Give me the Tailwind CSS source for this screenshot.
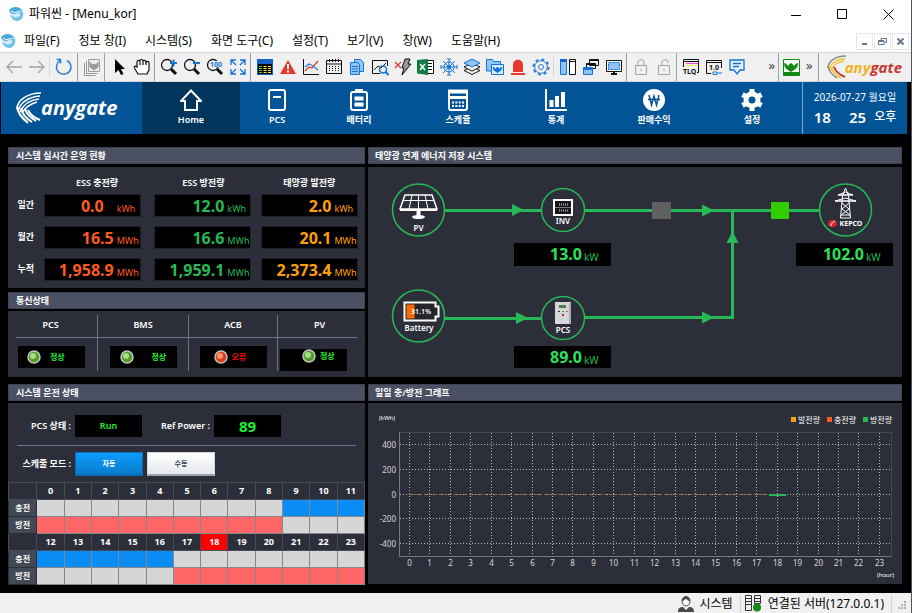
<!DOCTYPE html>
<html lang="ko">
<head>
    <meta charset="UTF-8">
    <meta name="viewport" content="width=device-width, initial-scale=1.0">
    <title>파워씬 - [Menu_kor]</title>
    <script src="https://cdn.jsdelivr.net/npm/@tailwindcss/browser@4"></script>
</head>
<body class="min-h-screen flex flex-col bg-black border-r border-gray-600 font-['Noto_Sans','Noto_Sans_CJK_KR',sans-serif] text-white text-[9px] leading-3">

    <!-- Shared icons -->
    <svg class="hidden">
        <symbol id="app-icon" viewBox="0 0 16 16">
            <circle cx="8.500" cy="8" r="7" fill="#d3ecf8"/>
            <path d="M1 4c4-4 10-4 14 1-3-1-5 0-6 2C6 9 2 8 1 4z" fill="#4aa9dc"/>
            <path d="M15 6c-1-1-4-1-5 1 3 0 3 3 0 4-3 1-5 0-7-2 0 4 4 6 7 6 4-1 6-5 5-9z" fill="#6fc3e8"/>
            <path d="M3 5c3 2 5 2 7 0" fill="none" stroke="#fff"/>
        </symbol>
        <symbol id="swoosh" viewBox="0 0 26 32">
            <path d="M25 1C12 1 1 8 1 17M24 4C12 5 4 11 2 19M23 7C13 8 7 13 4 20M21 10C14 12 9 16 6 21" fill="none" stroke="currentColor" stroke-width="1.700"/>
            <path d="M1 15c1 7 6 12 11 16M5 16c1 6 6 11 11 14M9 17c2 6 6 9 11 12M12 18c2 4 6 8 12 10" fill="none" stroke="currentColor" stroke-width="2"/>
        </symbol>
        <symbol id="magnifier" viewBox="0 0 20 20">
            <circle cx="8" cy="8" r="5.500" fill="none" stroke="#111" stroke-width="1.300"/>
            <path d="M12 12l5 5" stroke="#111" stroke-width="3"/>
        </symbol>
        <symbol id="turtle" viewBox="0 0 16 16">
            <path d="M1 4c2 0 3 2 4 3 1-1 1-2 3-3 2 1 2 2 3 3 1-1 2-3 4-3 0 4-2 6-4 7l-3 2-3-2C3 10 1 8 1 4z" fill="currentColor"/>
        </symbol>
    </svg>

    <!-- Title bar -->
    <header class="bg-white text-black">
        <div class="flex items-center h-7 pl-2 text-[12px] leading-4">
            <svg class="size-4 mr-[5px]"><use href="#app-icon"/></svg>
            <h1 class="flex-1">파워씬 - [Menu_kor]</h1>
            <button class="w-[46px] h-7 flex justify-center items-center" aria-label="Minimize"><svg class="size-[11px]" viewBox="0 0 11 11" stroke="#000"><path d="M0 6.500h10"/></svg></button>
            <button class="w-[46px] h-7 flex justify-center items-center" aria-label="Maximize"><svg class="size-[11px]" viewBox="0 0 11 11" stroke="#000" fill="none"><path d="M.5.5h9v9h-9z"/></svg></button>
            <button class="w-[46px] h-7 flex justify-center items-center" aria-label="Close"><svg class="size-[11px]" viewBox="0 0 11 11" stroke="#000"><path d="M.5.5l10 10M10.500.5l-10 10"/></svg></button>
        </div>
        <!-- Menu -->
        <div class="flex items-center h-6 pt-[2px] pr-[2px] text-[12px] leading-4">
            <svg class="size-4 mr-2"><use href="#app-icon"/></svg>
            <nav class="flex flex-1 gap-[19px]">
                <button>파일(F)</button>
                <button>정보 창(I)</button>
                <button>시스템(S)</button>
                <button>화면 도구(C)</button>
                <button>설정(T)</button>
                <button>보기(V)</button>
                <button>창(W)</button>
                <button>도움말(H)</button>
            </nav>
            <div class="flex gap-px *:size-[17px] *:border *:border-gray-200 *:flex *:items-center *:justify-center text-slate-500">
                <button aria-label="Minimize window"><svg class="size-[9px]" viewBox="0 0 9 9" stroke="currentColor" stroke-width="2"><path d="M2 7h5"/></svg></button>
                <button aria-label="Restore window"><svg class="size-[9px]" viewBox="0 0 9 9" stroke="currentColor" fill="none"><path d="M3 3V1.500h5.500v4H6.500M.5 3.500h5.500v4H.5zM.5 4.500h5"/></svg></button>
                <button aria-label="Close window"><svg class="size-[9px]" viewBox="0 0 9 9" stroke="currentColor" stroke-width="2"><path d="M1.500 1.500l6 6M7.500 1.500l-6 6"/></svg></button>
            </div>
        </div>
    </header>

    <!-- Toolbar -->
    <div class="flex h-[30px] bg-[#f0f0f0] border-y border-y-gray-300 pl-[2px]">
        <div class="flex pr-[1px] *:w-[23px] *:flex *:justify-center *:items-center">
            <button aria-label="Back"><svg class="size-[18px]" viewBox="0 0 18 18" fill="none" stroke="#a3a3a3" stroke-width="1.300"><path d="M17 9H2M8 3L2 9l6 6"/></svg></button>
            <button aria-label="Forward"><svg class="size-[18px]" viewBox="0 0 18 18" fill="none" stroke="#a3a3a3" stroke-width="1.300"><path d="M1 9h15M10 3l6 6-6 6"/></svg></button>
        </div>
        <div class="self-center w-px h-5 bg-gray-300"></div>
        <div class="flex pl-[2px] pr-[2px] border-r border-gray-400 *:w-[23px] *:flex *:justify-center *:items-center">
            <button aria-label="Refresh"><svg class="size-[18px]" viewBox="0 0 18 18" fill="none" stroke="#2b7cd3" stroke-width="1.500"><path d="M12 2.500A7.300 7.300 0 1 1 5 2.700M1.500 1.500h4v4"/></svg></button>
        </div>
        <div class="flex pl-[2px] pr-[1px] border-r border-gray-400 *:w-[23px] *:flex *:justify-center *:items-center">
            <button aria-label="Library"><svg class="size-[18px]" viewBox="0 0 18 18" fill="none" stroke="#9a9a9a"><path d="M5.500 1.500h11v12h-11zM3.500 3v12.500h11M1.500 5v12.500h11"/><path d="M7 4l2 3 2-1 2 1 2-3v5l-4 3-4-3z" fill="#9a9a9a"/></svg></button>
        </div>
        <div class="flex pl-[2px] pr-[1px] border-r border-gray-400 *:w-[23px] *:flex *:justify-center *:items-center">
            <button aria-label="Select"><svg class="size-[18px]" viewBox="0 0 18 18"><path d="M5 1v14l3.500-3 2.500 5 2.500-1-2.500-5h4z"/></svg></button>
            <button aria-label="Pan"><svg class="size-[18px]" viewBox="0 0 18 18" fill="#fff" stroke="#111" stroke-width="1.200"><path d="M5 16l-3-5c-1-2-1-3 1-3l1 1V4c0-2 3-2 3-1 0-2 3-2 3 0 0-1 3-1 3 1 1-1 3-1 3 1v7l-2 4z"/><path d="M7 3v4M10 3v4M13 4v3" fill="none"/></svg></button>
        </div>
        <div class="flex pl-[2px] pr-[1px] border-r border-gray-400 *:w-[23px] *:flex *:justify-center *:items-center">
            <button aria-label="Zoom in"><svg class="size-5" viewBox="0 0 20 20"><use href="#magnifier"/><path d="M11 6h7M14.500 2.500v7" stroke="#1473d8" stroke-width="2"/></svg></button>
            <button aria-label="Zoom out"><svg class="size-5" viewBox="0 0 20 20"><use href="#magnifier"/><path d="M11 6h7" stroke="#1473d8" stroke-width="2"/></svg></button>
            <button aria-label="Zoom 100%"><svg class="size-5" viewBox="0 0 20 20"><use href="#magnifier"/><path d="M5 4h14v6H5z" fill="#f0f0f0"/><text x="5" y="10" class="text-[7px] font-bold" fill="#1473d8">100</text></svg></button>
            <button aria-label="Fit"><svg class="size-[18px]" viewBox="0 0 18 18" fill="none" stroke="#1473d8" stroke-width="1.300"><path d="M2 7V2h5M11 2h5v5M16 11v5h-5M7 16H2v-5M2 2l5 5M16 2l-5 5M16 16l-5-5M2 16l5-5"/></svg></button>
        </div>
        <div class="flex pl-[2px] pr-[1px] *:w-[23px] *:flex *:justify-center *:items-center">
            <button aria-label="List"><svg class="size-4" viewBox="0 0 16 16"><path d="M0 0h16v16H0z" fill="#1464c8"/><path d="M1 5h14v10H1z"/><path d="M2 7.500h3M2 9.500h3M2 11.500h3M2 13.500h3" stroke="#5fd04a"/><path d="M6.500 7.500h3M6.500 9.500h3M6.500 11.500h3M6.500 13.500h3M11 7.500h3M11 9.500h3M11 11.500h3M11 13.500h3" stroke="#ffe14a"/></svg></button>
            <button aria-label="Alarm"><svg class="size-4" viewBox="0 0 16 16"><path d="M8 1l8 14H0z" fill="#e63a30"/><path d="M8 5v5M8 11.500v2" stroke="#fff" stroke-width="2"/></svg></button>
            <button aria-label="Trend"><svg class="size-[18px]" viewBox="0 0 18 18" fill="none"><path d="M1.500 1v15.500H17" stroke="#111"/><path d="M3 13l4-4 3 1 6-7" stroke="#e63a30" stroke-width="1.300"/><path d="M3 9l4-3 4 2 5 4" stroke="#2b7cd3" stroke-width="1.300"/></svg></button>
            <button aria-label="Schedule"><svg class="size-[18px]" viewBox="0 0 18 18" fill="none" stroke="#111"><path d="M1.500 2.500h15v13h-15zM2 6h14M4.500 1v3M7.500 1v3M10.500 1v3M13.500 1v3"/><path d="M4 8.500h11M4 10.500h11M4 12.500h11" stroke-dasharray="1 2"/></svg></button>
            <button aria-label="Report"><svg class="size-[18px]" viewBox="0 0 18 18" fill="#8ec5f5" stroke="#1473d8"><path d="M6.500 1.500h6l3 3v9h-9z"/><path d="M2.500 4.500h7l2 2v10h-9zM4 8.500h6M4 11h6M4 13.500h6"/></svg></button>
            <button aria-label="Analysis"><svg class="size-[18px]" viewBox="0 0 18 18" fill="none"><path d="M9 15.500H1.500v-13h15V8" stroke="#111"/><path d="M3 12l4-4 3 2 5-5" stroke="#111"/><circle cx="12" cy="11.500" r="3.500" stroke="#1473d8" stroke-width="1.500"/><path d="M14.500 14l3 3" stroke="#1473d8" stroke-width="2"/></svg></button>
            <button aria-label="Trip"><svg class="size-[18px]" viewBox="0 0 18 18"><path d="M1 4l6 6M7 4l-6 6" stroke="#e63a30" stroke-width="1.300"/><path d="M11 1h5l-2 5h3L8 17l2-7H8z" fill="#999" stroke="#111"/></svg></button>
            <button aria-label="Excel"><svg class="size-[18px]" viewBox="0 0 18 18"><path d="M10 2.500h6.500v13H10M11 5.500h4M11 8.500h4M11 11.500h4" fill="#fff" stroke="#111"/><path d="M0 2l11-1v16L0 15.500z" fill="#107c41"/><path d="M3 6l5 6M8 6l-5 6" stroke="#fff" stroke-width="1.500"/></svg></button>
            <button aria-label="Control"><svg class="size-[18px]" viewBox="0 0 18 18" fill="none" stroke="#1473d8"><circle cx="9" cy="9" r="5"/><circle cx="9" cy="9" r="1.500"/><path d="M9 1v16M1 9h16M3 3l12 12M15 3L3 15M7 1h4M7 17h4M1 7v4M17 7v4"/></svg></button>
            <button aria-label="Layers"><svg class="size-[18px]" viewBox="0 0 18 18" stroke="#111"><path d="M1 12.500l8 4 8-4-8-4z" fill="#f0f0f0"/><path d="M1 9l8 4 8-4-8-4z" fill="#f0f0f0"/><path d="M1 5l8 4 8-4-8-4z" fill="#8ec5f5" stroke="#1473d8"/></svg></button>
            <button aria-label="Folder"><svg class="size-[18px] text-[#1473d8]" viewBox="0 0 18 18"><path d="M.5 13V1.500h6l1 2h7V13z" fill="#8ec5f5" stroke="#1473d8"/><path d="M5.500 6.500h12v10h-12z" fill="#d8ecfc" stroke="#1473d8"/><use href="#turtle" x="6" y="6" width="11" height="11"/></svg></button>
            <button aria-label="Siren"><svg class="size-[18px]" viewBox="0 0 18 18" fill="#e63a30"><path d="M4 14V7c0-7 10-7 10 0v7zM2 15h14v2H2z"/></svg></button>
            <button aria-label="Options"><svg class="size-[18px]" viewBox="0 0 18 18" fill="none" stroke="#2b7cd3"><circle cx="9" cy="9" r="7.500" stroke-width="2" stroke-dasharray="3 2.890"/><circle cx="9" cy="9" r="6.300"/><circle cx="9" cy="9" r="2.500"/></svg></button>
        </div>
        <div class="self-center w-px h-5 bg-gray-300"></div>
        <div class="flex pl-[2px] pr-[1px] border-r border-gray-400 *:w-[23px] *:flex *:justify-center *:items-center">
            <button aria-label="Split"><svg class="size-4" viewBox="0 0 16 16" fill="#fff"><path d="M.5.5h6v15h-6z" fill="#8ec5f5" stroke="#1473d8"/><path d="M0 0h7v3H0z" fill="#1464c8"/><path d="M9.500.5h6v15h-6zM9.500 2.500h6" stroke="#111"/></svg></button>
            <button aria-label="Cascade"><svg class="size-4" viewBox="0 0 16 16" fill="#f0f0f0" stroke="#111"><path d="M6.500.5h9v6h-9zM6.500 1.500h9M3.500 4.500h9v5h-9zM3.500 5.500h9"/><path d="M.5 8.500h9v7h-9z" fill="#8ec5f5" stroke="#1473d8"/><path d="M0 10h10" stroke="#1473d8" stroke-width="2"/></svg></button>
            <button aria-label="Screen"><svg class="size-4" viewBox="0 0 16 16"><path d="M.5 1.500h15v11H.5z" fill="#fff" stroke="#111"/><path d="M2.500 3.500h11v7h-11z" fill="#8ec5f5" stroke="#1473d8" stroke-dasharray="3 1"/><path d="M8 12v3M5 15h6" stroke="#111" stroke-width="2"/></svg></button>
        </div>
        <div class="flex pl-[2px] pr-[1px] border-r border-gray-400 *:w-[23px] *:flex *:justify-center *:items-center">
            <button aria-label="Lock"><svg class="size-4" viewBox="0 0 16 16" fill="none" stroke="#a3a3a3"><path d="M2.500 6.500h11v9h-11zM5 6V3c0-3 6-3 6 0v3M8 10v2"/></svg></button>
            <button aria-label="Unlock"><svg class="size-4" viewBox="0 0 16 16" fill="none" stroke="#a3a3a3"><path d="M2.500 6.500h11v9h-11zM6 6V3c0-3 6-3 6 0v1M8 10v2"/></svg></button>
        </div>
        <div class="flex flex-1 pl-[2px] border-r border-gray-400">
            <button class="w-[23px] flex justify-center items-center" aria-label="TLQ"><svg class="size-[18px]" viewBox="0 0 18 18"><path d="M1.500 9V1.500h15v13H15M2 3.500h14" fill="none" stroke="#111"/><path d="M4 5.500h12" stroke="#f4e"/><path d="M4 7.500h12" stroke="#ee4"/><text x="1" y="16" class="text-[7px] font-bold" fill="#111">TLQ</text></svg></button>
            <button class="w-[23px] flex justify-center items-center" aria-label="Tag link"><svg class="size-[18px]" viewBox="0 0 18 18"><path d="M6 15.500H1.500v-13h15V10M2 4.500h14" fill="none" stroke="#111"/><text x="4" y="12" class="text-[7px] font-bold" fill="#111">1.0</text><path d="M8 14h4v2.500H8zM12 15h5" fill="none" stroke="#1473d8"/></svg></button>
            <button class="w-[23px] flex justify-center items-center" aria-label="Message"><svg class="size-[18px]" viewBox="0 0 18 18" fill="#e4f1fd" stroke="#1473d8" stroke-width="1.300"><path d="M2 2h14v10h-4l-3 4-3-4H2zM5 5.500h8M5 8.500h6"/></svg></button>
            <button class="ml-auto pr-[3px] pb-1 text-[13px] text-[#3f3f3f]">»</button>
        </div>
        <div class="flex pl-[1px] pr-[5px] border-r border-gray-400 text-[#3f3f3f]">
            <button class="w-[23px] flex justify-center items-center text-[#128a12]" aria-label="Turtle"><svg class="size-[17px]" viewBox="0 0 17 17"><path d="M.5.5h16v16H.5z" fill="#fff" stroke="currentColor"/><path d="M1 13h15v3H1z" fill="currentColor"/><use href="#turtle" width="16" height="16"/></svg></button>
            <button class="pl-[3px] text-[13px] pb-1">»</button>
        </div>
        <div class="flex items-center pl-2 pr-[9px]">
            <svg class="w-5 h-6" viewBox="0 0 20 24" fill="none" stroke-width="1.500"><path d="M19 1C9 1 1 6 1 13" stroke="#8a8a8a"/><path d="M18 4C9 4 3 9 2 15M17 6C10 7 5 11 4 16" stroke="#f2c230"/><path d="M1 11c1 6 4 9 9 12" stroke="#8a8a8a"/><path d="M4 12c1 5 5 8 10 11" stroke="#f2c230"/><path d="M7 12c2 5 6 8 11 10" stroke="#c8372d" stroke-width="2"/></svg>
            <span class="font-['Open_Sans',sans-serif] text-[15px] leading-5 font-bold italic text-[#f0b41e] -ml-[2px]">any<span class="text-[#c8372d]">gate</span></span>
        </div>
    </div>

    <!-- Navigation -->
    <nav class="grid grid-cols-[141fr_98fr_74fr_90fr_108fr_88fr_108fr_94fr_105fr] h-[52px] ml-px mr-1 bg-[#035496] font-semibold">
        <a href="#" class="flex items-center pl-[15px] font-bold">
            <svg class="w-[26px] h-8"><use href="#swoosh"/></svg>
            <span class="font-['Open_Sans',sans-serif] text-[20px] leading-6 italic -ml-px">anygate</span>
        </a>
        <a href="#" class="flex flex-col items-center gap-[3px] pt-[7px] bg-[#00365e]">
            <svg class="size-[22px]" viewBox="0 0 22 22" fill="none" stroke="#fff" stroke-width="2"><path d="M1 12L11 1.500 21 12h-4v9H5v-9z"/></svg>
            Home
        </a>
        <a href="#" class="flex flex-col items-center gap-[3px] pt-[7px]">
            <svg class="size-[22px]" viewBox="0 0 22 22" fill="none" stroke="#fff" stroke-width="2"><rect x="3" y="1" width="16" height="20" rx="2"/><path d="M7 8h8"/></svg>
            PCS
        </a>
        <a href="#" class="flex flex-col items-center gap-[3px] pt-[7px]">
            <svg class="size-[22px]" viewBox="0 0 22 22" fill="none" stroke="#fff" stroke-width="2"><rect x="3" y="3" width="16" height="18" rx="2"/><path d="M7 1.500h8M6.500 9.500h9M6.500 15.500h9" stroke-width="4"/></svg>
            배터리
        </a>
        <a href="#" class="flex flex-col items-center gap-[3px] pt-[7px]">
            <svg class="size-[22px]" viewBox="0 0 22 22" fill="none" stroke="#fff"><rect x="2" y="2" width="18" height="19" rx="2" stroke-width="2"/><path d="M1 2.500h20" stroke-width="4"/><path d="M1 8.500h20" stroke-width="3"/><path d="M5 13.500h12M5 17h12" stroke-width="2" stroke-dasharray="2 1.330"/></svg>
            스케쥴
        </a>
        <a href="#" class="flex flex-col items-center gap-[3px] pt-[7px]">
            <svg class="size-[22px]" viewBox="0 0 22 22" fill="none" stroke="#fff"><path d="M1 0v21h21" stroke-width="2"/><path d="M6.500 18v-7M12 18V7M18 18V3" stroke-width="4"/></svg>
            통계
        </a>
        <a href="#" class="flex flex-col items-center gap-[3px] pt-[7px]">
            <svg class="size-[22px]" viewBox="0 0 22 22"><circle cx="11" cy="11" r="11" fill="#fff"/><path d="M6 6l2.500 10L11 7l2.500 9L16 6M5 10.500h12" fill="none" stroke="#035496" stroke-width="1.500"/></svg>
            판매수익
        </a>
        <a href="#" class="flex flex-col items-center gap-[3px] pt-[7px] pr-[6px]">
            <svg class="size-[22px]" viewBox="0 0 22 22" fill="none" stroke="#fff"><circle cx="11" cy="11" r="6" stroke-width="5"/><path d="M11 0v4M11 18v4M1.500 5.500l3.500 2M17 14.500l3.500 2M1.500 16.500l3.500-2M17 7.500l3.500-2" stroke-width="5"/></svg>
            설정
        </a>
        <div class="border-l border-[#7fa9ca] flex flex-col items-center gap-[5px] pt-2 whitespace-nowrap">
            <time class="text-[10px] leading-[14px] font-normal">2026-07-27 월요일</time>
            <div class="flex items-center gap-[18px] text-[15px] leading-4">
                <span>18</span>
                <span class="flex items-center gap-2">25 <span class="text-[12px] font-medium">오후</span></span>
            </div>
        </div>
    </nav>

    <!-- Main Content -->
    <main class="flex-1 grid grid-cols-[357fr_534fr] gap-x-[3px] content-start pl-2 pr-[9px] pt-[13px] pb-2">
        <!-- Real-time figures and communication -->
        <div>
            <h2 class="h-[17px] leading-[15px] border border-[#3d4354] bg-[#4b5163] pl-[7px] font-semibold">시스템 실시간 운영 현황</h2>
            <table class="w-full table-fixed mt-[3px] bg-[#2c2f3a]">
                <thead>
                    <tr class="h-[27px]">
                        <td class="w-[10%]"></td>
                        <th class="w-[31%] pr-[4px] pt-1 font-semibold">ESS 충전량</th>
                        <th class="w-[30%] pr-[9px] pt-1 font-semibold">ESS 방전량</th>
                        <th class="pr-[8px] pt-1 font-semibold">태양광 발전량</th>
                    </tr>
                </thead>
                <tbody id="energy-table"></tbody>
            </table>

            <h2 class="mt-1 h-[17px] leading-[15px] border border-[#3d4354] bg-[#4b5163] pl-[7px] font-semibold">통신상태</h2>
            <div class="mt-[2px] h-[66px] px-2 pt-1 pb-[6px] bg-[#2c2f3a] grid grid-cols-[82fr_91fr_89fr_79fr] font-semibold divide-x divide-[#6c7688]">
                <div>
                    <h3 class="h-[23px] leading-5 pr-[12px] text-center border-b border-[#6c7688]">PCS</h3>
                    <p class="mt-2 ml-[2px] w-[67px] h-[22px] bg-black flex items-center pl-[9px] gap-[9px] text-[8px] text-[#22ee33]"><svg class="size-[14px]" viewBox="0 0 14 14"><circle cx="7" cy="7" r="6" fill="#4f9e2c" stroke="#c4c4c4" stroke-width="1.500"/><circle cx="6" cy="6" r="3" fill="#a8dc86"/></svg>정상</p>
                </div>
                <div>
                    <h3 class="h-[23px] leading-5 text-center border-b border-[#6c7688]">BMS</h3>
                    <p class="mt-2 mx-auto w-[67px] h-[22px] bg-black flex items-center pl-[10px] gap-[18px] text-[8px] text-[#22ee33]"><svg class="size-[14px]" viewBox="0 0 14 14"><circle cx="7" cy="7" r="6" fill="#4f9e2c" stroke="#c4c4c4" stroke-width="1.500"/><circle cx="6" cy="6" r="3" fill="#a8dc86"/></svg>정상</p>
                </div>
                <div>
                    <h3 class="h-[23px] leading-5 text-center border-b border-[#6c7688]">ACB</h3>
                    <p class="mt-2 mx-auto w-[67px] h-[22px] bg-black flex items-center pl-[14px] gap-1 text-[8px] text-[#ff0000]"><svg class="size-[14px]" viewBox="0 0 14 14"><circle cx="7" cy="7" r="6" fill="#e03a12" stroke="#c4c4c4" stroke-width="1.500"/><circle cx="6" cy="6" r="3" fill="#f59a78"/></svg>오류</p>
                </div>
                <div>
                    <h3 class="h-[23px] leading-5 pl-1 text-center border-b border-[#6c7688]">PV</h3>
                    <p class="mt-[11px] ml-[2px] w-[67px] h-[22px] bg-black flex items-center pl-[22px] pb-2 gap-1 text-[8px] text-[#22ee33]"><svg class="size-[14px]" viewBox="0 0 14 14"><circle cx="7" cy="7" r="6" fill="#4f9e2c" stroke="#c4c4c4" stroke-width="1.500"/><circle cx="6" cy="6" r="3" fill="#a8dc86"/></svg>정상</p>
                </div>
            </div>
        </div>

        <!-- Power flow -->
        <div>
            <h2 class="h-[17px] leading-[15px] border border-[#3d4354] bg-[#4b5163] pl-[6px] font-semibold">태양광 연계 에너지 저장 시스템</h2>
            <svg class="w-full mt-[3px] bg-[#2c2f3a] font-semibold" viewBox="0 0 534 210" fill="none">
                <g stroke="#26b956" stroke-width="3">
                    <path d="M76 43.500h98M216 43.500h236M76 151.500h98M216 150.500h150M364.500 43v107"/>
                </g>
                <g fill="#26b956">
                    <path d="M144 37l12 6-12 6zM148 145l12 6-12 6zM334 37.500l12 6-12 6zM334 144.500l12 6-12 6zM358.500 76l6-12 6 12z"/>
                </g>
                <path d="M284 35h19v17h-19z" fill="#606060"/>
                <path d="M403 35h18v17h-18z" fill="#33cc00"/>
                <g stroke="#26b956" stroke-width="1.500">
                    <circle cx="50.500" cy="43" r="26"/>
                    <circle cx="50.500" cy="149" r="26"/>
                    <circle cx="195" cy="43" r="21.500"/>
                    <circle cx="195" cy="151" r="21.500"/>
                    <circle cx="477.500" cy="43" r="26"/>
                </g>
                <!-- PV panel -->
                <g stroke="#fff">
                    <path d="M37 28h27l5 14H32z" stroke-width="1.500"/>
                    <path d="M35 33.500h31M44 28l-3 14M50.500 28v14M57 28l3 14"/>
                    <path d="M32 43h37" stroke-width="2"/>
                    <path d="M50.500 43v6" stroke-width="4"/>
                </g>
                <ellipse cx="50.500" cy="50" rx="6.500" ry="2" fill="#fff"/>
                <!-- Inverter -->
                <path d="M185 32h20v17h-20z" fill="#fff"/>
                <path d="M187 34h16v13h-16z" fill="#15171d"/>
                <path d="M187 40.500h16" stroke="#777"/>
                <path d="M191 37.500h10M191 43.500h10" stroke="#aaa" stroke-width="2" stroke-dasharray="1 1"/>
                <!-- Battery -->
                <path d="M36.500 135.500h31v4h3v10h-3v4h-31z" fill="#25262b" stroke="#fff" stroke-width="2"/>
                <path d="M38.500 137.500h8v14h-8z" fill="#ff6a00"/>
                <!-- PCS cabinet -->
                <path d="M187 135h16v22h-16z" fill="#d4d6d8"/>
                <path d="M201 136h2v21h-2z" fill="#a9adb0"/>
                <path d="M191 138h7v3h-7z" fill="#4b7a55"/>
                <path d="M190 144.500h2" stroke="#222"/><path d="M194 144.500h2" stroke="#2a2"/><path d="M198 144.500h2" stroke="#d55"/>
                <path d="M194 147h2v2h-2z" fill="#d22"/>
                <!-- Pylon -->
                <g stroke="#fff">
                    <path d="M477.500 21l-3 8-2 22h10l-2-22z"/>
                    <path d="M470 28h15M467 34h21" stroke-width="1.500"/>
                    <path d="M470 28l7.500-3 7.500 3M467 34l10.500-3 10.500 3M474 36l7 6-8 6M481 36l-7 6 8 6M473 48h9"/>
                </g>
                <ellipse cx="464.500" cy="56.500" rx="4.500" ry="3.500" fill="#d9222c"/>
                <path d="M463 59c0-3 2-4 4-5" stroke="#fff"/>
                <g fill="#fff" text-anchor="middle">
                    <text x="50.500" y="64" class="text-[8px]">PV</text>
                    <text x="195" y="57" class="text-[8px]">INV</text>
                    <text x="51" y="164" class="text-[8px]">Battery</text>
                    <text x="53" y="147" class="text-[7px]">31.1%</text>
                    <text x="195" y="166" class="text-[8px]">PCS</text>
                    <text x="483" y="59" class="text-[7px] font-bold">KEPCO</text>
                </g>
                <path d="M146 76h97v23h-97zM146 179h97v22h-97zM428 76h97v23h-97z" fill="#000"/>
                <g fill="#2ce25c" text-anchor="end" class="text-[16px] font-bold">
                    <text x="214" y="93">13.0</text>
                    <text x="214" y="196">89.0</text>
                    <text x="496" y="93">102.0</text>
                </g>
                <g fill="#26b956" class="text-[10px] font-normal">
                    <text x="216" y="94">kW</text>
                    <text x="216" y="197">kW</text>
                    <text x="498" y="94">kW</text>
                </g>
            </svg>
        </div>

        <!-- Operation state -->
        <div class="mt-[7px]">
            <h2 class="h-[17px] leading-[15px] border border-[#3d4354] bg-[#4b5163] pl-[7px] font-semibold">시스템 운전 상태</h2>
            <div class="mt-[2px] bg-[#2c2f3a]">
                <div class="h-[79px] px-[9px] pt-3 font-semibold">
                    <div class="flex items-center h-[31px] pb-2 border-b border-[#6c7688]">
                        <span class="w-[54px] text-right mr-1">PCS 상태 :</span>
                        <output class="w-[67px] h-[22px] leading-[22px] bg-black text-center text-[#22ee33]">Run</output>
                        <span class="w-[68px] text-right mr-1">Ref Power :</span>
                        <output class="w-[67px] h-[22px] leading-[22px] bg-black text-center text-[15px] font-bold text-[#22ee33]">89</output>
                    </div>
                    <div class="flex items-center gap-1 pt-[6px]">
                        <span class="w-[54px] text-right">스케줄 모드 :</span>
                        <button class="w-[68px] h-6 border border-[#0a6cb5] border-b-2 bg-linear-to-b from-[#0c9cff] to-[#0a7ccc] text-[7px]">자동</button>
                        <button class="w-[68px] h-6 border border-gray-300 border-b-2 border-b-gray-400 bg-linear-to-b from-white to-gray-200 text-[7px] text-gray-700">수동</button>
                    </div>
                </div>
                <table class="w-full table-fixed border-collapse text-center font-semibold">
                    <tbody id="schedule-table"></tbody>
                </table>
            </div>
        </div>

        <!-- Daily graph -->
        <div class="mt-[7px]">
            <h2 class="h-[17px] leading-[15px] border border-[#3d4354] bg-[#4b5163] pl-[6px] font-semibold">일일 충/방전 그래프</h2>
            <svg class="w-full mt-[2px] bg-[#2c2f3a]" viewBox="0 0 534 181" fill="none">
                <path d="M31.500 29.500h492v123.500" stroke="#44474f"/>
                <path d="M31.500 29v124.500h492" stroke="#777a80"/>
                <g id="grid-lines" stroke="#b5b5b5" stroke-dasharray="1 2"></g>
                <path d="M41 91.500h368" stroke="#92762f" stroke-dasharray="3 2"/>
                <path d="M401 92h17" stroke="#26b956" stroke-width="2"/>
                <g id="grid-labels" fill="#d8d8d8" class="text-[8px]"></g>
                <text x="11" y="17" fill="#fff" class="text-[6px]">(kWh)</text>
                <text x="526" y="174" fill="#fff" text-anchor="end" class="text-[6px]">(hour)</text>
                <path d="M423 14h5v5h-5z" fill="#ff9f0a"/>
                <path d="M459 14h5v5h-5z" fill="#ff5a1f"/>
                <path d="M495 14h5v5h-5z" fill="#26b956"/>
                <g fill="#fff" class="text-[8px]">
                    <text x="430" y="20">발전량</text>
                    <text x="466" y="20">충전량</text>
                    <text x="502" y="20">방전량</text>
                </g>
            </svg>
        </div>
    </main>

    <!-- Status bar -->
    <footer class="flex items-center justify-end h-[21px] bg-[#f0f0f0] text-black text-[12px] leading-5">
        <svg class="size-4 mr-[6px]" viewBox="0 0 16 16"><path d="M0 16c0-4 2-5 5-5l3 3 3-3c3 0 5 1 5 5z" fill="#4a4a4a"/><path d="M4 5c0-6 8-6 8 0 0 3-2 5-4 5S4 8 4 5z" fill="#fff" stroke="#4a4a4a"/><path d="M4 5c0-6 8-6 8 0-3 0-3-2-4-2S6 5 4 5z" fill="#4a4a4a"/></svg>
        <span class="pr-[7px] border-r border-gray-300">시스템</span>
        <svg class="size-[17px] ml-1 mr-[6px]" viewBox="0 0 17 17" fill="none" stroke="#333"><path d="M.5.5h6v15h-6zM9.500.5h6v8h-6zM0 3.500h7M0 6.500h7M0 9.500h7M9 3.500h7M9 6.500h7"/><circle cx="12" cy="12.500" r="4" fill="#128a12" stroke="none"/></svg>
        <span class="pr-[7px] border-r border-gray-300">연결된 서버(127.0.0.1)</span>
        <svg class="size-[9px] ml-[6px] mr-1 self-end mb-1" viewBox="0 0 9 9" fill="#b0b0b0"><path d="M6 0h2v2H6zM3 3h2v2H3zM6 3h2v2H6zM0 6h2v2H0zM3 6h2v2H3zM6 6h2v2H6z"/></svg>
    </footer>

    <script>
        // Energy totals
        const energy = [
            { label: '일간', unit: 'kWh', values: ['0.0', '12.0', '2.0'] },
            { label: '월간', unit: 'MWh', values: ['16.5', '16.6', '20.1'] },
            { label: '누적', unit: 'MWh', values: ['1,958.9', '1,959.1', '2,373.4'] }
        ];
        const energyColors = ['text-[#ff5a1f]', 'text-[#26b956]', 'text-[#ff9f0a]'];
        const energyTable = document.getElementById('energy-table');
        energy.forEach((item, r) => {
            const pad = r === energy.length - 1 ? 'pb-[7px]' : 'pb-[9px]';
            const row = document.createElement('tr');
            row.innerHTML = `<th class="${pad} align-top leading-[21px] font-semibold">${item.label}</th>` + item.values.map((value, i) => `
                <td class="${pad}">
                    <div class="flex items-baseline w-[97px] h-[23px] border border-[#1d2028] bg-black ${energyColors[i]}">
                        <span class="w-[69px] text-right text-[16px] leading-[22px] font-bold ${value === '0.0' ? 'pr-[10px]' : ''}">${value}</span>
                        <span class="ml-[3px] text-[9px]">${item.unit}</span>
                    </div>
                </td>`).join('');
            energyTable.appendChild(row);
        });

        // Schedule
        const currentHour = 18;
        const charge = [9, 10, 11, 12, 13, 14, 15, 16];
        const discharge = [0, 1, 2, 3, 4, 5, 6, 7, 8, 17, 18, 19, 20, 21, 22, 23];
        const scheduleTable = document.getElementById('schedule-table');
        [0, 12].forEach((start) => {
            const hours = Array.from({ length: 12 }, (_, i) => start + i);
            scheduleTable.innerHTML += `
                <tr class="h-[17px]">
                    <td class="w-[8%] border border-[#444a57]"></td>
                    ${hours.map(h => `<th class="p-0 border border-[#444a57] ${h === currentHour ? 'bg-[#ff0000]' : ''}">${h}</th>`).join('')}
                </tr>
                <tr class="h-[17px]">
                    <th class="p-0 border border-[#2c2f3a] bg-[#444a55] text-[8px]">충전</th>
                    ${hours.map(h => `<td class="border border-[#85878d] ${charge.includes(h) ? 'bg-[#0a8ef5]' : 'bg-[#d6d6d6]'}"></td>`).join('')}
                </tr>
                <tr class="h-[17px]">
                    <th class="p-0 border border-[#2c2f3a] bg-[#444a55] text-[8px]">방전</th>
                    ${hours.map(h => `<td class="border border-[#85878d] ${discharge.includes(h) ? 'bg-[#ff6666]' : 'bg-[#d6d6d6]'}"></td>`).join('')}
                </tr>`;
        });

        // Graph axes
        let lines = '';
        let labels = '';
        for (let h = 0; h < 24; h++) {
            const x = Math.round(41 + h * 20.43) + 0.5;
            lines += `<path d="M${x} 30v123"/>`;
            labels += `<text x="${x}" y="163" text-anchor="middle">${h}</text>`;
        }
        [400, 200, 0, -200, -400].forEach((v, i) => {
            const y = Math.round(41 + i * 24.75) + 0.5;
            lines += `<path d="M32 ${y}h491"/>`;
            labels += `<text x="28" y="${y + 3}" text-anchor="end">${v}</text>`;
        });
        document.getElementById('grid-lines').innerHTML = lines;
        document.getElementById('grid-labels').innerHTML = labels;
    </script>
</body>
</html>
